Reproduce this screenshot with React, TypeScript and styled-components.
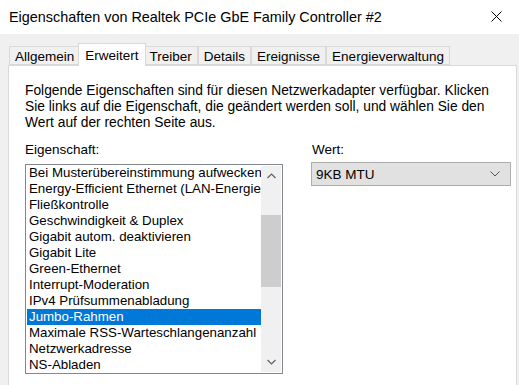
import styled, { createGlobalStyle } from "styled-components";

const GlobalStyle = createGlobalStyle`
  html, body {
    margin: 0;
    padding: 0;
    background: #f0f0f0;
    font-family: "Liberation Sans", Arial, sans-serif;
    font-size: 13.5px;
    color: #000;
  }
`;

const tabs = [
  "Allgemein",
  "Erweitert",
  "Treiber",
  "Details",
  "Ereignisse",
  "Energieverwaltung",
];

const properties = [
  "Bei Musterübereinstimmung aufwecken",
  "Energy-Efficient Ethernet (LAN-Energiesparmodus)",
  "Fließkontrolle",
  "Geschwindigkeit & Duplex",
  "Gigabit autom. deaktivieren",
  "Gigabit Lite",
  "Green-Ethernet",
  "Interrupt-Moderation",
  "IPv4 Prüfsummenabladung",
  "Jumbo-Rahmen",
  "Maximale RSS-Warteschlangenanzahl",
  "Netzwerkadresse",
  "NS-Abladen",
];

export default function App() {
  return (
    <Wrapper>
      <GlobalStyle />
      <TitleBar>
        <Title>Eigenschaften von Realtek PCIe GbE Family Controller #2</Title>
        <CloseBtn>
          <svg width="11" height="11" viewBox="0 0 11 11">
            <path d="M0.5 0.5 L10.5 10.5 M10.5 0.5 L0.5 10.5" stroke="#000" strokeWidth="1" />
          </svg>
        </CloseBtn>
      </TitleBar>
      <Body>
        <TabStrip>
          {tabs.map((t) => (
            <Tab key={t} $active={t === "Erweitert"}>
              {t}
            </Tab>
          ))}
        </TabStrip>
        <Panel>
          <Description>
            Folgende Eigenschaften sind für diesen Netzwerkadapter verfügbar. Klicken
            <br />
            Sie links auf die Eigenschaft, die geändert werden soll, und wählen Sie den
            <br />
            Wert auf der rechten Seite aus.
          </Description>
          <Columns>
            <LeftCol>
              <Label>Eigenschaft:</Label>
              <ListBox>
                <Items>
                  {properties.map((p) => (
                    <Item key={p} $selected={p === "Jumbo-Rahmen"}>
                      {p}
                    </Item>
                  ))}
                </Items>
                <ScrollBar>
                  <ArrowBtn>
                    <svg width="9" height="6" viewBox="0 0 9 6">
                      <path d="M0.5 5 L4.5 1 L8.5 5" stroke="#606060" fill="none" strokeWidth="1.2" />
                    </svg>
                  </ArrowBtn>
                  <Track>
                    <Thumb />
                  </Track>
                  <ArrowBtn>
                    <svg width="9" height="6" viewBox="0 0 9 6">
                      <path d="M0.5 1 L4.5 5 L8.5 1" stroke="#606060" fill="none" strokeWidth="1.2" />
                    </svg>
                  </ArrowBtn>
                </ScrollBar>
              </ListBox>
            </LeftCol>
            <RightCol>
              <Label>Wert:</Label>
              <Select>
                <span>9KB MTU</span>
                <svg width="10" height="6" viewBox="0 0 10 6">
                  <path d="M0.5 0.5 L5 5 L9.5 0.5" stroke="#555" fill="none" strokeWidth="1" />
                </svg>
              </Select>
            </RightCol>
          </Columns>
        </Panel>
      </Body>
    </Wrapper>
  );
}

const Wrapper = styled.div`
  width: 519px;
  height: 385px;
  overflow: hidden;
  display: flex;
  flex-direction: column;
`;

const TitleBar = styled.div`
  height: 33px;
  background: #fff;
  display: flex;
  align-items: center;
  justify-content: space-between;
  padding: 0 9px 1px;
  flex-shrink: 0;
`;

const Title = styled.div`
  font-size: 14.4px;
  color: #000;
`;

const CloseBtn = styled.div`
  width: 46px;
  display: flex;
  justify-content: center;
  margin-right: -9px;
  margin-left: 4px;
`;

const Body = styled.div`
  flex: 1;
  background: #f0f0f0;
  padding: 9px 2px 0 8px;
  display: flex;
  flex-direction: column;
`;

const TabStrip = styled.div`
  display: flex;
  align-items: flex-end;
  height: 22px;
  padding-left: 1px;
  position: relative;
  z-index: 1;
`;

const Tab = styled.div<{ $active?: boolean }>`
  height: ${(p) => (p.$active ? "23px" : "19px")};
  margin-bottom: ${(p) => (p.$active ? "-1px" : "0")};
  padding: 0 ${(p) => (p.$active ? "6px" : "5px")};
  margin-left: ${(p) => (p.$active ? "-2px" : "0")};
  margin-right: ${(p) => (p.$active ? "-2px" : "0")};
  box-sizing: border-box;
  border: 1px solid #d9d9d9;
  border-bottom: ${(p) => (p.$active ? "none" : "1px solid #d9d9d9")};
  background: ${(p) => (p.$active ? "#fff" : "#f0f0f0")};
  display: flex;
  align-items: center;
  padding-top: ${(p) => (p.$active ? "0" : "1px")};
  font-size: 13.5px;
  white-space: nowrap;
  position: relative;
  z-index: ${(p) => (p.$active ? 2 : 1)};
  & + & {
    border-left: ${(p) => (p.$active ? "1px solid #d9d9d9" : "none")};
  }
`;

const Panel = styled.div`
  flex: 1;
  background: #fff;
  border: 1px solid #d9d9d9;
  border-bottom: none;
  padding: 17px 0 0 16px;
`;

const Description = styled.div`
  line-height: 16px;
  font-size: 13.8px;
  color: #000;
  white-space: nowrap;
`;

const Columns = styled.div`
  display: flex;
  margin-top: 11px;
`;

const LeftCol = styled.div`
  width: 258px;
  display: flex;
  flex-direction: column;
`;

const RightCol = styled.div`
  margin-left: 28px;
  width: 200px;
  display: flex;
  flex-direction: column;
`;

const Label = styled.div`
  line-height: 16px;
  height: 16px;
  margin-bottom: 6px;
  ${RightCol} & {
    margin-bottom: 4px;
    margin-left: 1px;
  }
`;

const ListBox = styled.div`
  height: 210px;
  box-sizing: border-box;
  border: 1px solid #828790;
  display: flex;
  overflow: hidden;
`;

const Items = styled.div`
  flex: 1;
  min-width: 0;
  padding: 0 0 0 1px;
  overflow: hidden;
`;

const Item = styled.div<{ $selected?: boolean }>`
  height: 16px;
  line-height: 16px;
  padding-left: 2px;
  font-size: 13.3px;
  white-space: nowrap;
  overflow: hidden;
  background: ${(p) => (p.$selected ? "#0078d7" : "transparent")};
  color: ${(p) => (p.$selected ? "#fff" : "#000")};
`;

const ScrollBar = styled.div`
  width: 20px;
  flex-shrink: 0;
  margin: 1px 1px 1px 0;
  background: #f0f0f0;
  display: flex;
  flex-direction: column;
`;

const ArrowBtn = styled.div`
  height: 20px;
  display: flex;
  align-items: center;
  justify-content: center;
`;

const Track = styled.div`
  flex: 1;
  position: relative;
`;

const Thumb = styled.div`
  position: absolute;
  left: 0;
  right: 0;
  top: 29px;
  height: 72px;
  background: #cdcdcd;
`;

const Select = styled.div`
  height: 24px;
  box-sizing: border-box;
  border: 1px solid #adadad;
  background: #e1e1e1;
  display: flex;
  align-items: center;
  justify-content: space-between;
  padding: 0 10px 0 4px;
  font-size: 13.5px;
`;
